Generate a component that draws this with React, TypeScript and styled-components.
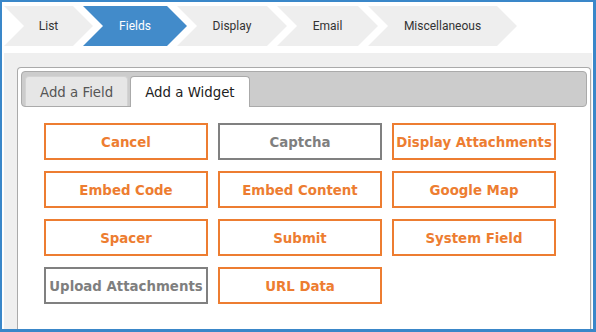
import React, { useState } from 'react';
import styled, { createGlobalStyle } from 'styled-components';

type Step = { label: string; width: number };
type Widget = { label: string; disabled?: boolean };

// wizard steps, width is measured from the notch edge to the arrow tip
const steps: Step[] = [
  { label: 'List', width: 89 },
  { label: 'Fields', width: 104 },
  { label: 'Display', width: 110 },
  { label: 'Email', width: 101 },
  { label: 'Miscellaneous', width: 149 },
];

const widgets: Widget[] = [
  { label: 'Cancel' },
  { label: 'Captcha', disabled: true },
  { label: 'Display Attachments' },
  { label: 'Embed Code' },
  { label: 'Embed Content' },
  { label: 'Google Map' },
  { label: 'Spacer' },
  { label: 'Submit' },
  { label: 'System Field' },
  { label: 'Upload Attachments', disabled: true },
  { label: 'URL Data' },
];

const App = () => {
  const [step, setStep] = useState('Fields');
  const [tab, setTab] = useState('widget');

  return (
    <>
      <GlobalStyle />
      <Frame>
        <Steps>
          {steps.map((s) => (
            <Crumb key={s.label} $w={s.width} $active={s.label === step} onClick={() => setStep(s.label)}>
              {s.label}
            </Crumb>
          ))}
        </Steps>
        <Workspace>
          <Panel>
            <TabBar>
              <Tab $active={tab === 'field'} onClick={() => setTab('field')}>Add a Field</Tab>
              <Tab $active={tab === 'widget'} onClick={() => setTab('widget')}>Add a Widget</Tab>
            </TabBar>
            <WidgetGrid>
              {widgets.map((w) => (
                <WidgetButton key={w.label} $muted={w.disabled}>
                  {w.label}
                </WidgetButton>
              ))}
            </WidgetGrid>
          </Panel>
        </Workspace>
      </Frame>
    </>
  );
};

export default App;

const GlobalStyle = createGlobalStyle`
  html, body {
    margin: 0;
    padding: 0;
    background: #fff;
  }
  * {
    box-sizing: border-box;
  }
`;

const Frame = styled.div`
  width: 596px;
  height: 332px;
  display: flex;
  flex-direction: column;
  border-style: solid;
  border-color: #3a87c9;
  border-width: 2px 3px 3px 2px;
  background: #fff;
  overflow: hidden;
`;

const Steps = styled.div`
  display: flex;
  height: 40px;
  margin: 4px 0 0 2px;
  flex-shrink: 0;
`;

const Crumb = styled.div<{ $w: number; $active?: boolean }>`
  width: ${(p) => p.$w}px;
  height: 40px;
  display: flex;
  align-items: center;
  justify-content: center;
  font-family: Roboto, 'Liberation Sans', Arial, sans-serif;
  font-size: 12px;
  color: ${(p) => (p.$active ? '#fff' : '#333')};
  background: ${(p) => (p.$active ? '#428bca' : '#eeeeee')};
  clip-path: polygon(0 0, calc(100% - 20px) 0, 100% 50%, calc(100% - 20px) 100%, 0 100%, 20px 50%);
  cursor: pointer;

  & + & {
    margin-left: -10px;
  }
`;

const Workspace = styled.div`
  flex: 1;
  display: flex;
  flex-direction: column;
  margin: 7px 1px 0 2px;
  padding: 14px 1px 0 13px;
  background: #efefef;
`;

const Panel = styled.div`
  flex: 1;
  padding: 3px;
  background: #fff;
  border: 1px solid #aaaaaa;
  border-bottom: none;
  border-radius: 4px 4px 0 0;
  font-family: 'DejaVu Sans', Verdana, sans-serif;
`;

const TabBar = styled.div`
  display: flex;
  align-items: flex-start;
  gap: 2px;
  height: 36px;
  padding: 4px 3px 0;
  background: #cccccc;
  border: 1px solid #aaaaaa;
  border-radius: 4px;
`;

const Tab = styled.div<{ $active?: boolean }>`
  height: ${(p) => (p.$active ? 31 : 30)}px;
  margin-bottom: ${(p) => (p.$active ? -1 : 0)}px;
  padding: 1px 14px 0;
  line-height: 29px;
  font-size: 13.33px;
  white-space: nowrap;
  color: ${(p) => (p.$active ? '#212121' : '#555555')};
  background: ${(p) => (p.$active ? '#ffffff' : '#e6e6e6')};
  border: 1px solid ${(p) => (p.$active ? '#aaaaaa' : '#d3d3d3')};
  border-bottom: none;
  border-radius: 4px 4px 0 0;
  cursor: pointer;
`;

const WidgetGrid = styled.div`
  display: grid;
  grid-template-columns: repeat(3, 164px);
  grid-auto-rows: 37px;
  column-gap: 10px;
  row-gap: 11px;
  margin: 16px 0 0 23px;
`;

const WidgetButton = styled.div<{ $muted?: boolean }>`
  display: flex;
  align-items: center;
  justify-content: center;
  padding-top: 2px;
  border: 2px solid ${(p) => (p.$muted ? '#808080' : '#ed7d31')};
  background: #fff;
  color: ${(p) => (p.$muted ? '#7f7f7f' : '#ed7d31')};
  font-size: 13.33px;
  font-weight: bold;
  white-space: nowrap;
  cursor: pointer;
`;
